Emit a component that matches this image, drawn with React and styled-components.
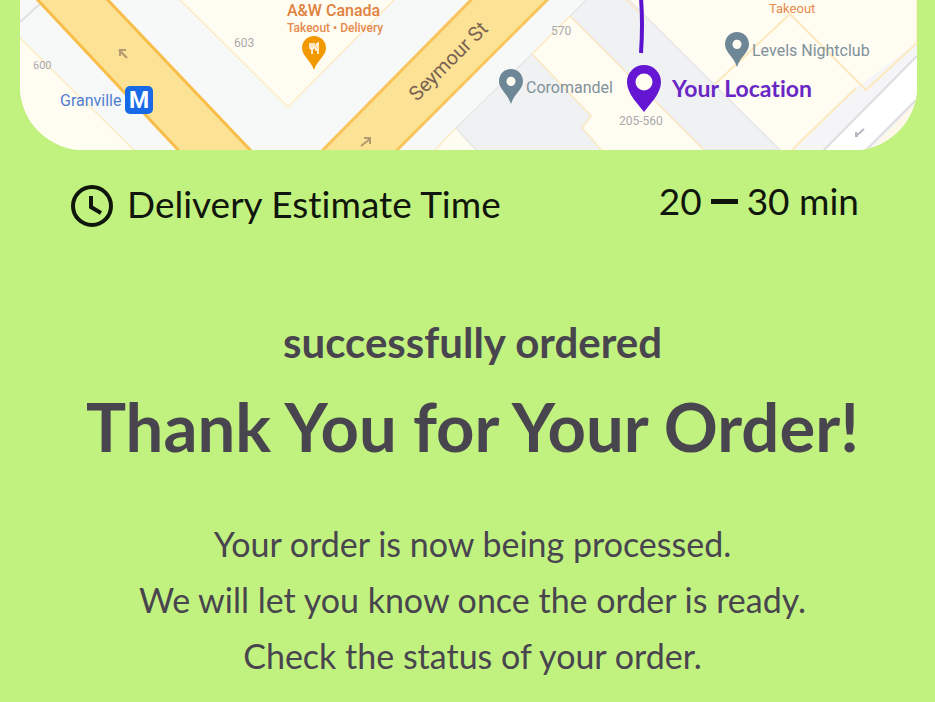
import React from 'react';
import styled, { createGlobalStyle } from 'styled-components';

const GlobalStyle = createGlobalStyle`
  * { box-sizing: border-box; }
  body {
    margin: 0;
    background: #c1f27f;
    font-family: Lato, "Open Sans", sans-serif;
    font-variant-ligatures: none;
  }
`;

const Screen = styled.main`
  display: flex;
  flex-direction: column;
  min-height: 100vh;
  overflow: hidden;
  background: #c1f27f;
`;

const MapCard = styled.section`
  margin: 0 18px 0 20px;
  overflow: hidden;
  border-radius: 0 0 64px 64px;
  background: #f7f8f8;
`;

const MapDrawing = styled.svg`
  display: block;
  width: 100%;
  height: auto;
`;

const MapLabel = styled.text`
  font-family: ${(p) => (p.$brand ? 'Lato' : 'Roboto')}, sans-serif;
  font-size: ${(p) => p.$size || 16}px;
  font-weight: ${(p) => p.$weight || 400};
  fill: ${(p) => p.$color};
`;

const Estimate = styled.section`
  display: flex;
  align-items: center;
  justify-content: space-between;
  padding: 31px 76px 0 70px;
  color: #10160c;
  font-size: 37px;
  line-height: 40px;
`;

const EstimateLabel = styled.div`
  display: flex;
  align-items: center;
  gap: 13px;
`;

const EstimateText = styled.span`
  padding-bottom: 4px;
`;

const ClockIcon = styled.svg`
  width: 44px;
  height: 44px;
`;

const EstimateValue = styled.div`
  display: flex;
  align-items: center;
  gap: 9px;
  padding-bottom: 10px;
`;

const RangeDash = styled.span`
  width: 27px;
  height: 5px;
  background: currentColor;
`;

const Confirmation = styled.section`
  padding: 83px 10px 0 20px;
  color: #49454f;
  text-align: center;
`;

const Status = styled.p`
  margin: 0;
  font-size: 42px;
  font-weight: 700;
  line-height: 56px;
`;

const Title = styled.h1`
  margin: 16px 0 0;
  font-size: 67px;
  font-weight: 700;
  line-height: 80px;
  white-space: nowrap;
`;

const Message = styled.p`
  margin: 50px 0 0;
  font-size: 34px;
  line-height: 56px;
`;

const MessageLine = styled.span`
  display: block;
`;

function Pin({ x, y, width, height, color, hole }) {
  return (
    <svg x={x} y={y} width={width} height={height} viewBox="0 0 24 34" preserveAspectRatio="none">
      <path d="M12 0C5.2 0 0 5.2 0 12c0 8 8.600 11.800 12 22 3.400-10.200 12-14 12-22C24 5.200 18.800 0 12 0Z" fill={color} />
      {hole && <circle cx="12" cy="12" r={hole} fill="#fffcf2" />}
    </svg>
  );
}

function DeliveryMap() {
  return (
    <MapDrawing viewBox="20 0 897 150" role="img" aria-label="Delivery map">
      <rect x="20" width="897" height="150" fill="#f7f8f8" />
      <g fill="#fffcf2" stroke="#fdebc4" strokeWidth="1.500">
        <path d="M18 36 136 152H18Z" />
        <path d="M176-4 288 107 398-4Z" />
        <path d="M433 152 456 128 478 152Z" />
        <path d="M532 54 570 16 741 152H600L582 128 591 116Z" />
        <path d="M622-4 778 152H792L917 44V-4Z" />
      </g>
      <g fill="#f0f1f2" stroke="#e5e7e9" strokeWidth="1.500">
        <path d="M456 128 532 54 591 116 582 128 603 152H478Z" />
        <path d="M570 16 590-4H625L780 150H704Z" />
      </g>
      <path d="M532 54 591 116 582 128 603 152M570 16 704 150M622-4 645 18" fill="none" stroke="#fdebc4" strokeWidth="1.500" />
      <path d="M792 152 856 88 917 43V152Z" fill="#f5f5f7" />
      <path d="M822 152 917 56V99L864 152Z" fill="#fff" />
      <path d="M868 152 917 102V152Z" fill="#fff8e9" />
      <path d="M822 152 917 56M864 152 917 99" stroke="#dddde2" strokeWidth="2" />
      <path d="M715 84 790 14 866 90 917 43M856 88 792 150" fill="none" stroke="#fce9bd" strokeWidth="2" />
      <path d="M20 22 41 3" stroke="#dedfe1" strokeWidth="2" />

      <path d="M34-4 182 154H254L104-4Z" fill="#fce294" stroke="#f9bd49" strokeWidth="3" />
      <path d="M475-4 319 154H393L551-4Z" fill="#fce294" stroke="#f9c45b" strokeWidth="3" />
      <g stroke="#b49a70" strokeWidth="2" fill="none">
        <path d="m127 58-8-8m1 6v-6h6" />
        <path d="m361 146 9-7m-6-1h6v6" />
      </g>
      <path d="m856 136 8-7m-6 7h-2v-4" stroke="#b7b7c0" strokeWidth="2" fill="none" />

      <MapLabel x="33" y="69" $size={11} $color="#aaa9ac">600</MapLabel>
      <MapLabel x="234" y="47" $size={12} $color="#aaa9ac">603</MapLabel>
      <MapLabel x="551" y="35" $size={12} $color="#aaa9ac">570</MapLabel>
      <MapLabel x="619" y="125" $size={12} $color="#aaa9ac">205-560</MapLabel>

      <MapLabel x="60" y="106" $color="#507fd0">Granville</MapLabel>
      <rect x="125" y="86" width="28" height="28" rx="5" fill="#1769e8" />
      <MapLabel x="139" y="108" textAnchor="middle" $size={23} $weight={700} $color="#fff">M</MapLabel>

      <MapLabel x="287" y="16" $weight={500} $color="#df823e">A&amp;W Canada</MapLabel>
      <MapLabel x="287" y="32" $size={12} $weight={500} $color="#e58b4c">Takeout • Delivery</MapLabel>
      <Pin x={302} y={36} width={24} height={34} color="#f29900" />
      <path d="M310 43v4q0 2 2 2v5m0-11v6m2-6v4q0 2-2 2m6 5V43q-3 2-2 7h2" fill="none" stroke="#fff" strokeWidth="1.500" />

      <MapLabel transform="translate(417 102) rotate(-45)" $size={20} $color="#7b6253">Seymour St</MapLabel>

      <Pin x={499} y={69} width={24} height={35} color="#6d8797" hole={4.5} />
      <MapLabel x="526" y="93" $size={16} $color="#7f919b">Coromandel</MapLabel>

      <MapLabel x="769" y="13" $size={13} $color="#e58b4c">Takeout</MapLabel>
      <Pin x={725} y={32} width={24} height={35} color="#6d8797" hole={4.5} />
      <MapLabel x="752" y="56" $size={16} $color="#7f919b">Levels Nightclub</MapLabel>

      <path d="M641-2Q643 24 641 53" fill="none" stroke="#5b12cf" strokeWidth="4" />
      <svg x="627" y="65" width="34" height="47" viewBox="0 0 34 47">
        <path d="M17 0C7.500 0 0 7.500 0 17c0 12 12 23 17 30 5-7 17-18 17-30C34 7.500 26.500 0 17 0Z" fill="#6416d2" />
        <circle cx="17" cy="17" r="8.500" fill="#fffcf2" />
      </svg>
      <MapLabel x="672" y="97" $brand $size={23} $weight={700} $color="#6826c4">Your Location</MapLabel>
    </MapDrawing>
  );
}

export default function App() {
  return (
    <>
      <GlobalStyle />
      <Screen>
        <MapCard>
          <DeliveryMap />
        </MapCard>
        <Estimate>
          <EstimateLabel>
            <ClockIcon viewBox="0 0 44 44" fill="none" stroke="currentColor" strokeWidth="4" aria-hidden="true">
              <circle cx="22" cy="22" r="19" />
              <path d="M21 12v11l10 6" />
            </ClockIcon>
            <EstimateText>Delivery Estimate Time</EstimateText>
          </EstimateLabel>
          <EstimateValue>
            <span>20</span>
            <RangeDash role="img" aria-label="to" />
            <span>30 min</span>
          </EstimateValue>
        </Estimate>
        <Confirmation>
          <Status>successfully ordered</Status>
          <Title>Thank You for Your Order!</Title>
          <Message>
            <MessageLine>Your order is now being processed.</MessageLine>
            <MessageLine>We will let you know once the order is ready.</MessageLine>
            <MessageLine>Check the status of your order.</MessageLine>
          </Message>
        </Confirmation>
      </Screen>
    </>
  );
}
